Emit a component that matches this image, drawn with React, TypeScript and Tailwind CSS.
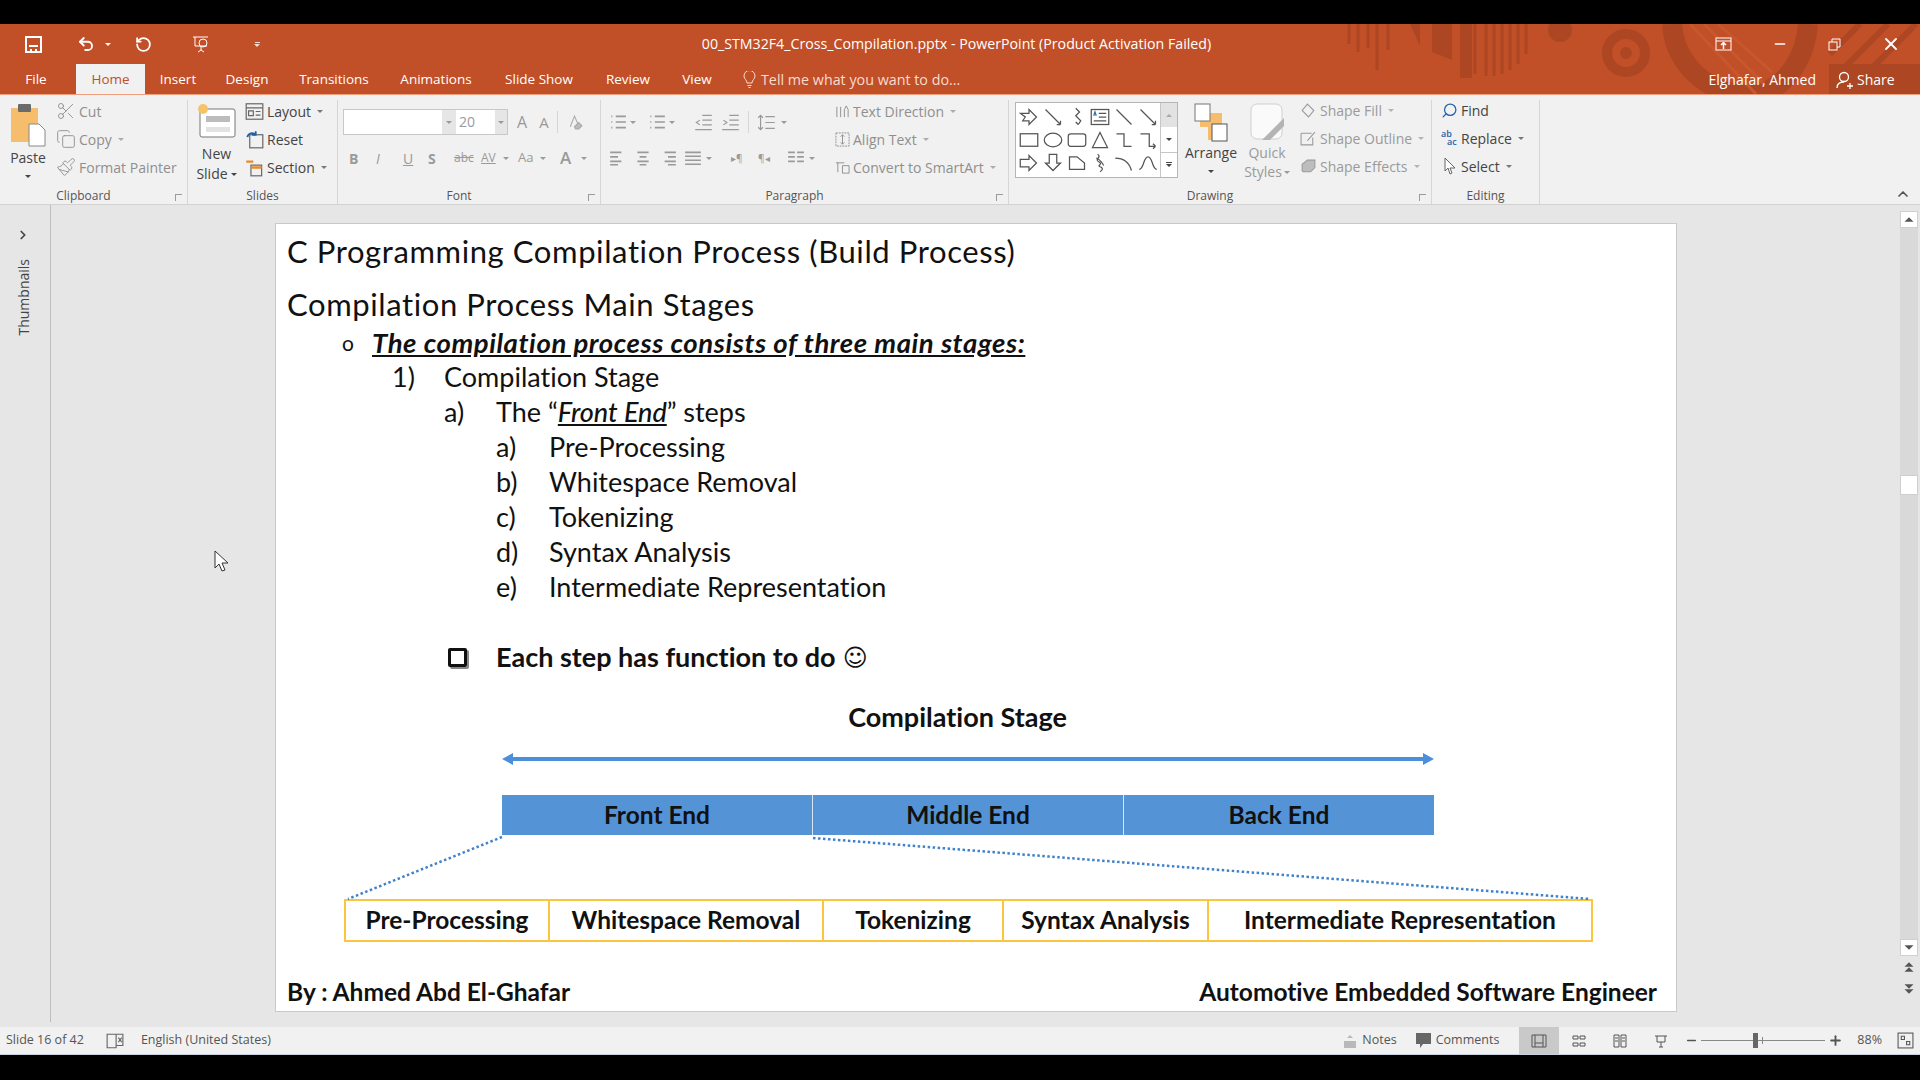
import { ChevronRight, ChevronUp, Copy, Minus, Paintbrush, Plus, RotateCw, Scissors, Search, Undo2, X } from 'lucide-react'
import type { ReactNode } from 'react'

const ui = 'font-["Open_Sans",sans-serif]'
const slideFont = 'font-["Lato",sans-serif] [font-variant-ligatures:none]'

const TABS = [
  { label: 'File', w: 'w-[76px] pr-[4px]' },
  { label: 'Home', w: 'w-[69px]', active: true },
  { label: 'Insert', w: 'w-[66px]' },
  { label: 'Design', w: 'w-[72px]' },
  { label: 'Transitions', w: 'w-[102px]' },
  { label: 'Animations', w: 'w-[102px]' },
  { label: 'Slide Show', w: 'w-[104px]' },
  { label: 'Review', w: 'w-[74px]' },
  { label: 'View', w: 'w-[64px]' },
]

function Caret({ className = '' }: { className?: string }) {
  return <span className={`inline-block w-0 h-0 border-x-[3px] border-x-transparent border-t-[3px] border-t-current ${className}`} />
}

function Glyph({ children, size = 16, className = '' }: { children: ReactNode; size?: number; className?: string }) {
  return (
    <svg width={size} height={size} viewBox="0 0 16 16" fill="none" stroke="currentColor" strokeWidth="1" className={`shrink-0 ${className}`}>
      {children}
    </svg>
  )
}

function SmallRow({ icon, label, caret, className = '' }: { icon: ReactNode; label: string; caret?: boolean; className?: string }) {
  return (
    <div className={`flex items-center h-[28px] gap-[3px] whitespace-nowrap ${className}`}>
      {icon}
      <span>{label}</span>
      {caret && <Caret className="ml-[3px] opacity-70" />}
    </div>
  )
}

function Group({ label, w, launcher, children }: { label: string; w: string; launcher?: boolean; children: ReactNode }) {
  return (
    <div className={`relative flex flex-col h-full border-r border-[#d6d6d6] ${w}`}>
      <div className="flex-1 flex min-h-0">{children}</div>
      <div className={`h-[16px] leading-[16px] text-center text-[12px] text-[#555] ${launcher ? 'pr-[20px]' : ''}`}>{label}</div>
      {launcher && (
        <span className="absolute right-[5px] bottom-[3px] w-[7px] h-[7px] border-l border-t border-[#9a9a9a]" />
      )}
    </div>
  )
}

function Gallery() {
  const shapes = [
    <path d="M1 5h7V2l6 6-6 6v-3H3l2-3z" />, <path d="M2 2l12 12M14 14h-3M14 14v-3" />, <path d="M7 1l3 3-3 3 4 4-2 3M9 14l-2-2" />,
    <g><rect x="1" y="2" width="14" height="12" /><path d="M7 5h6M7 8h6M3 11h10" /><path d="M3 7l1-3 1 3" stroke="#2b6cb0" /></g>, <path d="M2 2l12 12" />, <path d="M2 2l12 12M14 14h-3M14 14v-3" />,
    <rect x="1" y="3" width="14" height="10" />, <ellipse cx="8" cy="8" rx="7" ry="5.5" />, <rect x="1" y="3" width="14" height="10" rx="2" />,
    <path d="M8 2l6 12H2z" />, <path d="M2 3h6v10h6" />, <path d="M2 3h7v10h5M14 13l-2-2M14 13l-2 2" />,
    <path d="M1 5h7V2l6 6-6 6v-3H1z" />, <path d="M5 1h6v7h3l-6 6-6-6h3z" />, <path d="M2 3h6l6 5v5H2z" />,
    <path d="M6 1c4 2-3 4 1 6s-2 3 1 4 2 3 0 4M5 4c3 1 4 3 6 6" />, <path d="M1 4c6 0 11 3 13 10" />, <path d="M1 13C5 13 4 3 8 3s3 10 7 10" />,
  ]
  return (
    <div className="flex mt-[2px] ml-[6px] h-[76px] w-[163px] border border-[#b5b5b5] bg-white">
      <div className="flex-1 grid grid-cols-6 grid-rows-3 pl-[1px] py-[2px] text-[#555]">
        {shapes.map((s, i) => (
          <div key={i} className="flex items-center justify-center">
            <Glyph size={20}>{s}</Glyph>
          </div>
        ))}
      </div>
      <div className="w-[17px] flex flex-col border-l border-[#c6c6c6] text-[#444]">
        <div className="flex-1 bg-[#e2e2e2] flex items-center justify-center text-[#aaa]"><Caret className="rotate-180" /></div>
        <div className="flex-1 flex items-center justify-center border-b border-[#c6c6c6]"><Caret /></div>
        <div className="flex-1 flex flex-col gap-[1px] items-center justify-center"><span className="w-[6px] h-px bg-current" /><Caret /></div>
      </div>
    </div>
  )
}

function TitleBanner() {
  return (
    <svg className="absolute left-[1320px] top-0" width="600" height="70" viewBox="0 0 600 70" fill="none" stroke="#ad4723">
      {/* stripes and rings of the Office banner */}
      <g strokeWidth="3">
        <path d="M29 0v20M38 0v28M48 0v24M57 0v46M68 0v26" />
        <path d="M155 0v50M166 0v52M174 0v52M182 0v50M190 0v46M198 0v40M206 0v30" />
      </g>
      <path d="M90 0h10v22zM112 0h20v36l-20-8zM140 0h12v54h-12z" fill="#ad4723" stroke="none" />
      <circle cx="240" cy="6" r="12" fill="#ad4723" stroke="none" />
      <circle cx="306" cy="29" r="19" strokeWidth="10" />
      <circle cx="306" cy="29" r="6" fill="#ad4723" stroke="none" />
      <path d="M352 0c2 32 24 62 64 70h24c30-10 46-40 48-70" strokeWidth="20" />
      <path d="M370 0l66 70M384 0l60 60M398 0l54 48" stroke="#c8572e" strokeWidth="3" />
      <path d="M510 30l30-30M524 44l44-44M540 56l56-56" strokeWidth="6" />
    </svg>
  )
}

function TitleBar() {
  return (
    <div className={`relative h-[71px] bg-[#c14f28] text-white overflow-hidden ${ui}`}>
      <TitleBanner />
      <div className="relative flex items-center h-[40px]">
        <div className="flex items-center pl-[25px] w-[280px]">
          <svg width="17" height="17" viewBox="0 0 17 17" fill="none" stroke="white" strokeWidth="2"><rect x="1" y="1" width="15" height="15" /><path d="M4 10h9M5 14h2M10 14h2" /></svg>
          <Undo2 size={18} strokeWidth={2.5} className="ml-[35px]" />
          <Caret className="ml-[10px]" />
          <RotateCw size={17} strokeWidth={2.5} className="ml-[24px] -scale-x-100" />
          <svg width="20" height="20" viewBox="0 0 20 20" fill="none" stroke="white" className="ml-[39px]"><path d="M2 3h15M4 3v9h12M10 12v4M7 18l3-2 3 2" /><circle cx="12" cy="9" r="4" /></svg>
          <span className="ml-[43px] flex flex-col items-center gap-[1px] opacity-80"><span className="w-[5px] h-px bg-white" /><Caret /></span>
        </div>
        <div className="flex-1 text-center text-[14.2px] whitespace-nowrap -ml-[82px]">00_STM32F4_Cross_Compilation.pptx - PowerPoint (Product Activation Failed)</div>
        <div className="flex items-center gap-[40px] pr-[19px]">
          <svg width="17" height="14" viewBox="0 0 17 14" fill="none" stroke="white"><rect x="1" y="1" width="15" height="12" fill="#c14f28" /><path d="M1 4h15" /><path d="M8.500 12V6M6 8l2.500-2.500L11 8" strokeWidth="1.500" /></svg>
          <Minus size={16} />
          <svg width="13" height="13" viewBox="0 0 13 13" fill="none" stroke="white"><rect x="1" y="4" width="8" height="8" /><path d="M4 4V1h8v8H9" /></svg>
          <X size={20} strokeWidth={2.2} />
        </div>
      </div>
      <div className="relative flex items-stretch h-[31px] text-[13.5px]">
        {TABS.map(t => (
          <div
            key={t.label}
            className={`${t.w} flex items-center justify-center ${t.active ? 'bg-[#f1f1f1] text-[#c14f28]' : ''}`}
          >
            {t.label}
          </div>
        ))}
        <div className="ml-[14px] flex items-center gap-[5px] text-[14.3px] text-[#f8dccf]">
          <svg width="13" height="17" viewBox="0 0 13 17" fill="none" stroke="currentColor"><path d="M4 12c0-3-3-4-3-7a5.500 5.500 0 0 1 11 0c0 3-3 4-3 7zM4.500 14.500h4M5.500 16.500h2" /></svg>
          <span>Tell me what you want to do...</span>
        </div>
        <div className="ml-auto flex items-stretch text-[14px]">
          <div className="flex items-center pr-[13px]">Elghafar, Ahmed</div>
          <div className="w-[91px] bg-[#ad4622] flex items-center pl-[7px] gap-[4px]">
            <svg width="17" height="18" viewBox="0 0 17 18" fill="none" stroke="white" strokeWidth="1.300"><circle cx="8" cy="6" r="4.500" /><path d="M1 17c0-4 3-6 7-6M11 15h6M14 12v6" /></svg>
            Share
          </div>
        </div>
      </div>
      <div className="absolute left-0 right-0 bottom-0 h-px bg-[#ef9f7c]" />
    </div>
  )
}

function Ribbon() {
  return (
    <div className={`relative flex h-[110px] pt-[5px] bg-[#f1f1f1] border-b border-[#d2d2d2] text-[14px] text-[#444] ${ui}`}>
      <Group label="Clipboard" w="w-[188px]" launcher>
        <div className="w-[56px] flex flex-col items-center">
          <svg width="36" height="44" viewBox="0 0 36 44" className="mt-[3px]">
            <rect x="1" y="5" width="27" height="34" fill="#f5bd6c" />
            <rect x="8" y="1" width="13" height="8" rx="1" fill="#6b6b6b" />
            <path d="M19 21h10l6 6v16H19z" fill="white" stroke="#888" />
          </svg>
          <span className="mt-[2px] leading-[18px]">Paste</span>
          <Caret className="mt-[8px]" />
        </div>
        <div className="text-[#8f8f8f] -mt-[3px]">
          <SmallRow icon={<Scissors size={20} strokeWidth={1.1} />} label="Cut" />
          <SmallRow icon={<Copy size={20} strokeWidth={1.1} />} label="Copy" caret />
          <SmallRow icon={<Paintbrush size={20} strokeWidth={1.1} />} label="Format Painter" />
        </div>
      </Group>

      <Group label="Slides" w="w-[150px]">
        <div className="w-[57px] flex flex-col items-center">
          <svg width="40" height="38" viewBox="0 0 40 38" className="mt-[3px] mb-[3px]">
            <rect x="3" y="6" width="35" height="28" rx="2" fill="white" stroke="#777" />
            <rect x="9" y="13" width="24" height="6" fill="#bcbcbc" />
            <rect x="9" y="24" width="24" height="5" fill="#e2e2e2" />
            <circle cx="6" cy="6" r="5" fill="#f5c469" />
          </svg>
          <span className="leading-[20px]">New</span>
          <span className="leading-[20px] flex items-center gap-[3px]">Slide<Caret /></span>
        </div>
        <div className="-mt-[3px]">
          <SmallRow
            icon={<Glyph size={19} className="text-[#666]"><rect x="1" y="1.500" width="14" height="13" /><path d="M1 5h14M3 7.500h4v4H3zM9 8h4M9 11h4" /></Glyph>}
            label="Layout"
            caret
          />
          <SmallRow
            icon={<Glyph size={19}><rect x="4" y="4" width="11" height="11" stroke="#666" /><path d="M2 6a4 4 0 0 1 7-2M9 1v3H6" stroke="#1d5fa8" strokeWidth="1.500" /></Glyph>}
            label="Reset"
          />
          <SmallRow
            icon={<Glyph size={19}><rect x="5" y="6" width="9" height="9" stroke="#666" /><path d="M1 3h6M5 8h9" stroke="#e88b2d" strokeWidth="2" /></Glyph>}
            label="Section"
            caret
          />
        </div>
      </Group>

      <Group label="Font" w="w-[263px]" launcher>
        <div className="flex flex-col w-full pl-[5px] pt-[9px]">
          <div className="flex items-center h-[26px]">
            <div className="flex h-[26px] w-[165px] border border-[#c8c8c8] bg-white text-[#9a9a9a]">
              <div className="w-[98px]" />
              <div className="w-[14px] bg-[#e6e6e6] flex items-center justify-center"><Caret /></div>
              <div className="w-[39px] pl-[3px] leading-[24px]">20</div>
              <div className="w-[12px] bg-[#e6e6e6] flex items-center justify-center"><Caret /></div>
            </div>
            <span className="ml-[9px] text-[16px] text-[#999]">A</span>
            <span className="ml-[12px] text-[15px] text-[#999]">A</span>
            <span className="ml-[8px] w-px h-[22px] bg-[#d6d6d6]" />
            <Glyph size={17} className="ml-[8px] text-[#aaa]"><path d="M4 12L8 2l3 7" /><path d="M8 12l4-4 3 3-3 3H9z" fill="#bbb" /></Glyph>
          </div>
          <div className="flex items-center h-[26px] mt-[10px] pl-[6px] text-[#9a9a9a]">
            <span className="w-[27px] font-bold">B</span>
            <span className="w-[27px] italic">I</span>
            <span className="w-[25px] underline">U</span>
            <span className="w-[26px] font-bold">S</span>
            <span className="w-[27px] text-[12px] line-through">abc</span>
            <span className="w-[22px] text-[12px] underline">AV</span>
            <Caret className="mr-[9px]" />
            <span className="w-[22px] text-[13px]">Aa</span>
            <Caret />
            <span className="ml-[14px] w-[18px] text-[17px] font-semibold">A</span>
            <Caret className="ml-[3px]" />
          </div>
        </div>
      </Group>

      <Group label="Paragraph" w="w-[408px]" launcher>
        <div className="flex flex-col pl-[8px] pt-[9px] w-[234px] text-[#9a9a9a]">
          <div className="flex items-center h-[26px] gap-[3px]">
            <Glyph size={18}><path d="M6 3h9M6 8h9M6 13h9M2 3h1M2 8h1M2 13h1" strokeWidth="1.400" /></Glyph>
            <Caret className="mr-[9px]" />
            <Glyph size={18}><path d="M6 3h9M6 8h9M6 13h9M2 3h1M2 8h1M2 13h1" strokeWidth="1.400" /></Glyph>
            <Caret className="mr-[16px]" />
            <Glyph size={19}><path d="M7 2h8M7 6h8M7 10h8M1 14h14M5 6L2 8l3 2" /></Glyph>
            <Glyph size={19} className="ml-[5px]"><path d="M7 2h8M7 6h8M7 10h8M1 14h14M2 6l3 2-3 2" /></Glyph>
            <span className="w-px h-[22px] bg-[#d6d6d6] mx-[5px]" />
            <Glyph size={19}><path d="M7 3h8M7 8h8M7 13h8M3 2v12M1 4l2-2 2 2M1 12l2 2 2-2" /></Glyph>
            <Caret className="ml-[2px]" />
          </div>
          <div className="flex items-center h-[26px] mt-[10px] gap-[7px]">
            <Glyph size={18}><path d="M1 3h10M1 7h7M1 11h10M1 14h7" strokeWidth="1.400" /></Glyph>
            <Glyph size={18}><path d="M3 3h10M5 7h6M3 11h10M5 14h6" strokeWidth="1.400" /></Glyph>
            <Glyph size={18}><path d="M5 3h10M8 7h7M5 11h10M8 14h7" strokeWidth="1.400" /></Glyph>
            <Glyph size={18}><path d="M1 3h14M1 6.500h14M1 10h14M1 13.500h14" strokeWidth="1.400" /></Glyph>
            <Caret className="-ml-[3px] mr-[12px]" />
            <span className="text-[10px] w-[20px]">▸¶</span>
            <span className="text-[10px] w-[20px]">¶◂</span>
            <Glyph size={18} className="ml-[2px]"><path d="M1 3h6M9 3h6M1 7h6M9 7h6M1 11h6M9 11h6" strokeWidth="1.400" /></Glyph>
            <Caret className="-ml-[3px]" />
          </div>
        </div>
        <div className="text-[#8f8f8f] -mt-[3px]">
          <SmallRow icon={<Glyph size={15}><path d="M2 3v11M6 3v11M10 14V6l2-4 2 4v8" /></Glyph>} label="Text Direction" caret />
          <SmallRow icon={<Glyph size={15}><rect x="1" y="1" width="14" height="14" strokeDasharray="2 1" /><path d="M8 3v10M6 5l2-2 2 2M6 11l2 2 2-2" /></Glyph>} label="Align Text" caret />
          <SmallRow icon={<Glyph size={15}><path d="M1 3h9M3 3v10M8 6h7v8H8z" /></Glyph>} label="Convert to SmartArt" caret />
        </div>
      </Group>

      <Group label="Drawing" w="w-[423px]" launcher>
        <Gallery />
        <div className="w-[62px] flex flex-col items-center ml-[2px]">
          <svg width="38" height="40" viewBox="0 0 38 40" className="mt-[3px]">
            <rect x="16" y="10" width="13" height="27" fill="#f5bd6c" />
            <rect x="8" y="10" width="22" height="14" fill="#f5bd6c" />
            <rect x="3" y="1" width="15" height="17" fill="white" stroke="#777" />
            <rect x="20" y="21" width="15" height="17" fill="white" stroke="#555" />
          </svg>
          <span className="leading-[18px] mt-[1px]">Arrange</span>
          <Caret className="mt-[8px]" />
        </div>
        <div className="w-[50px] flex flex-col items-center text-[#9a9a9a]">
          <svg width="38" height="40" viewBox="0 0 38 40" className="mt-[2px]">
            <rect x="3" y="2" width="31" height="35" rx="6" fill="#fafafa" stroke="#cfcfcf" />
            <path d="M14 38l22-22v8L22 38z" fill="#b4b4b4" />
          </svg>
          <span className="leading-[18px] mt-[2px]">Quick</span>
          <span className="leading-[20px] flex items-center gap-[2px]">Styles<Caret /></span>
        </div>
        <div className="ml-[8px] text-[#9a9a9a] -mt-[4px]">
          <SmallRow icon={<Glyph size={17}><path d="M7 2l6 6-5 6-6-6z" /></Glyph>} label="Shape Fill" caret />
          <SmallRow icon={<Glyph size={17}><path d="M1 3h10M1 3v11h11V7M7 10l7-8" /></Glyph>} label="Shape Outline" caret />
          <SmallRow icon={<Glyph size={17}><path d="M2 12V6l5-4h7v7l-4 4H3z" fill="#bdbdbd" /></Glyph>} label="Shape Effects" caret />
        </div>
      </Group>

      <Group label="Editing" w="w-[108px]">
        <div className="pl-[9px] -mt-[4px]">
          <SmallRow icon={<Search size={17} strokeWidth={1.800} className="text-[#1f62ad] -scale-x-100" />} label="Find" />
          <SmallRow
            icon={<span className="w-[17px] text-[9px] leading-[8px] font-semibold text-[#1f62ad]">ab<br /><span className="pl-[6px]">ac</span></span>}
            label="Replace"
            caret
          />
          <SmallRow
            icon={<svg width="17" height="19" viewBox="0 0 17 19" fill="white" stroke="#666"><path d="M4 1v13l3-3 2 6 2-1-2-5h5z" /></svg>}
            label="Select"
            caret
          />
        </div>
      </Group>

      <ChevronUp size={16} strokeWidth={2.500} className="absolute right-[9px] bottom-[2px] text-[#555]" />
    </div>
  )
}

function Row({ indent, marker, children, textIndent }: { indent: string; marker?: string; children: ReactNode; textIndent: string }) {
  return (
    <div className={`flex items-center h-[35px] whitespace-nowrap ${indent}`}>
      {marker && <span className={textIndent}>{marker}</span>}
      {children}
    </div>
  )
}

function Slide() {
  return (
    <div className={`relative w-[1402px] h-[789px] bg-white border border-[#c9c9c9] text-[#111] ${slideFont}`}>
      <div className="flex flex-col text-[27px]">
        <div className="h-[55px] pl-[11px] flex items-center text-[31px] tracking-[0.6px]">C Programming Compilation Process (Build Process)</div>
        <div className="h-[46px] pl-[11px] pt-[5px] flex items-center text-[31px] tracking-[0.6px]">Compilation Process Main Stages</div>
        <Row indent="pl-[66px]" marker="o" textIndent="w-[30px] text-[21px]">
          <span className="font-bold italic underline text-[27.500px] tracking-[0.57px]">The compilation process consists of three main stages:</span>
        </Row>
        <Row indent="pl-[116px]" marker="1)" textIndent="w-[52px]">Compilation Stage</Row>
        <Row indent="pl-[168px]" marker="a)" textIndent="w-[52px]">
          <span>The “<span className="italic font-medium underline">Front End</span>” steps</span>
        </Row>
        <Row indent="pl-[220px]" marker="a)" textIndent="w-[53px]">Pre-Processing</Row>
        <Row indent="pl-[220px]" marker="b)" textIndent="w-[53px]">Whitespace Removal</Row>
        <Row indent="pl-[220px]" marker="c)" textIndent="w-[53px]">Tokenizing</Row>
        <Row indent="pl-[220px]" marker="d)" textIndent="w-[53px]">Syntax Analysis</Row>
        <Row indent="pl-[220px]" marker="e)" textIndent="w-[53px]">Intermediate Representation</Row>
        <div className="mt-[35px] h-[35px] pl-[172px] flex items-center font-bold">
          <span className="w-[19px] h-[19px] border-[3px] border-[#111] rounded-[2px] mr-[29px] shadow-[2px_2px_0_#888]" />
          Each step has function to do
          <span className="ml-[7px] font-['DejaVu_Sans',sans-serif] font-normal text-[24px]">☺</span>
        </div>
        <div className="mt-[25px] h-[35px] flex items-center justify-center font-bold pr-[37px]">Compilation Stage</div>
        <svg width="932" height="16" viewBox="0 0 932 16" className="mt-[16px] ml-[226px] text-[#4a8fd8]">
          <path d="M8 8h916" stroke="currentColor" strokeWidth="4" />
          <path d="M0 8l11-6v12zM932 8l-11-6v12z" fill="currentColor" />
        </svg>
        <div className="mt-[28px] ml-[226px] w-[932px] h-[40px] flex bg-[#5593d7] font-bold text-[24.500px]">
          <div className="w-[310px] flex items-center justify-center">Front End</div>
          <div className="w-[311px] flex items-center justify-center border-l border-[#d8e6f6]">Middle End</div>
          <div className="w-[311px] flex items-center justify-center border-l border-[#d8e6f6]">Back End</div>
        </div>
        <div className="mt-[64px] ml-[68px] w-[1249px] h-[43px] flex border-2 border-[#fbc540] font-bold text-[24.500px]">
          <div className="w-[202px] flex items-center justify-center">Pre-Processing</div>
          <div className="w-[274px] flex items-center justify-center border-l-2 border-[#fbc540]">Whitespace Removal</div>
          <div className="w-[180px] flex items-center justify-center border-l-2 border-[#fbc540]">Tokenizing</div>
          <div className="w-[205px] flex items-center justify-center border-l-2 border-[#fbc540]">Syntax Analysis</div>
          <div className="flex-1 flex items-center justify-center border-l-2 border-[#fbc540]">Intermediate Representation</div>
        </div>
        <div className="mt-[32px] h-[36px] pl-[11px] pr-[19px] flex items-center justify-between font-bold text-[24.500px]">
          <span>By : Ahmed Abd El-Ghafar</span>
          <span>Automotive Embedded Software Engineer</span>
        </div>
      </div>
      <svg className="absolute left-0 top-0" width="1401" height="789" viewBox="0 0 1401 789" fill="none" stroke="#3f82cc" strokeWidth="2.500" strokeDasharray="2.500 2.500">
        <path d="M226 613L72 675" />
        <path d="M537 614L1314 675" />
      </svg>
    </div>
  )
}

function Scrollbar() {
  return (
    <div className="w-[18px] ml-auto mr-[2px] flex flex-col items-center h-full pt-[6px] text-[#555]">
      <div className="h-[17px] w-full bg-white flex items-center justify-center border border-[#d0d0d0]"><Caret className="rotate-180 scale-150" /></div>
      <div className="flex-1 w-full bg-[#d9d9d9] flex flex-col">
        <div className="h-[247px]" />
        <div className="h-[20px] bg-white border border-[#cfcfcf]" />
      </div>
      <div className="h-[17px] w-full bg-white flex items-center justify-center border border-[#d0d0d0]"><Caret className="scale-150" /></div>
      <div className="h-[22px] flex items-center justify-center flex-col"><Caret className="rotate-180 scale-150" /><Caret className="rotate-180 scale-150 mt-[2px]" /></div>
      <div className="h-[22px] flex items-center justify-center flex-col"><Caret className="scale-150" /><Caret className="scale-150 mt-[2px]" /></div>
      <div className="h-[27px]" />
    </div>
  )
}

function Main() {
  return (
    <div className="flex h-[822px] bg-[#e6e6e6]">
      <div className={`w-[51px] h-[817px] border-r border-[#bdbdbd] flex flex-col items-center text-[#444] text-[14px] ${ui}`}>
        <ChevronRight size={14} strokeWidth={3} className="mt-[23px] -ml-[4px]" />
        <div className="mt-[17px] -ml-[4px] [writing-mode:vertical-rl] rotate-180">Thumbnails</div>
      </div>
      <div className="pt-[18px] ml-[224px]">
        <Slide />
      </div>
      <Scrollbar />
    </div>
  )
}

function StatusBar() {
  return (
    <div className={`h-[28px] bg-[#f1f1f1] border-b border-[#c9d1df] flex items-center text-[12.500px] text-[#555] ${ui}`}>
      <span className="ml-[6px]">Slide 16 of 42</span>
      <Glyph size={18} className="ml-[22px] text-[#666]"><path d="M1 2h8v12H1zM9 2h6v10H9zM11 5l3 4M14 5l-3 4" /></Glyph>
      <span className="ml-[17px]">English (United States)</span>
      <div className="ml-auto flex items-center h-full">
        <svg width="14" height="16" viewBox="0 0 14 16" fill="#b9b9b9"><path d="M1 8h12v7H1zM4 5l3-3 3 3z" /></svg>
        <span className="ml-[5px] mr-[18px]">Notes</span>
        <svg width="17" height="17" viewBox="0 0 17 17" fill="#666"><path d="M1 1h15v11H8l-3 4v-4H1z" /></svg>
        <span className="ml-[4px] mr-[20px]">Comments</span>
        <div className="w-[40px] h-full bg-[#c9c9c9] flex items-center justify-center"><Glyph><path d="M1 2h14v12H1zM4 2v12M12 2v12M4 10h8" /></Glyph></div>
        <div className="w-[40px] flex justify-center"><Glyph><path d="M2 3h5v3H2zM9 3h5v3H9zM2 10h5v3H2zM9 10h5v3H9z" /></Glyph></div>
        <div className="w-[41px] flex justify-center"><Glyph><path d="M2 2h5v12H2zM9 2h5v12H9zM3 5h3M10 5h3M3 8h3M10 8h3" /></Glyph></div>
        <div className="w-[41px] flex justify-center"><Glyph><path d="M2 3h12M4 3v6h8V3M8 9v5M6 14h4" /></Glyph></div>
        <Minus size={13} strokeWidth={3} className="ml-[4px] text-[#555]" />
        <div className="relative w-[124px] h-px bg-[#888] mx-[3px]">
          <span className="absolute left-[52px] -top-[7px] w-[5px] h-[15px] bg-[#666]" />
          <span className="absolute left-[61px] -top-[3px] w-px h-[7px] bg-[#888]" />
        </div>
        <Plus size={15} strokeWidth={3} className="text-[#555]" />
        <span className="ml-[14px]">88%</span>
        <Glyph size={17} className="ml-[15px] mr-[6px]"><rect x="1" y="1" width="14" height="14" /><path d="M4 4h3v3H4zM9 9h3v3H9z" /></Glyph>
      </div>
    </div>
  )
}

export default function App() {
  return (
    <div className="w-[1920px] h-[1080px] bg-black flex flex-col overflow-hidden relative">
      <div className="h-[24px] shrink-0" />
      <TitleBar />
      <Ribbon />
      <Main />
      <StatusBar />
      <svg className="absolute left-[214px] top-[550px]" width="16" height="22" viewBox="0 0 16 22" fill="white" stroke="#333">
        <path d="M1 1v17l4-4 3 7 3-1-3-7h6z" />
      </svg>
    </div>
  )
}
